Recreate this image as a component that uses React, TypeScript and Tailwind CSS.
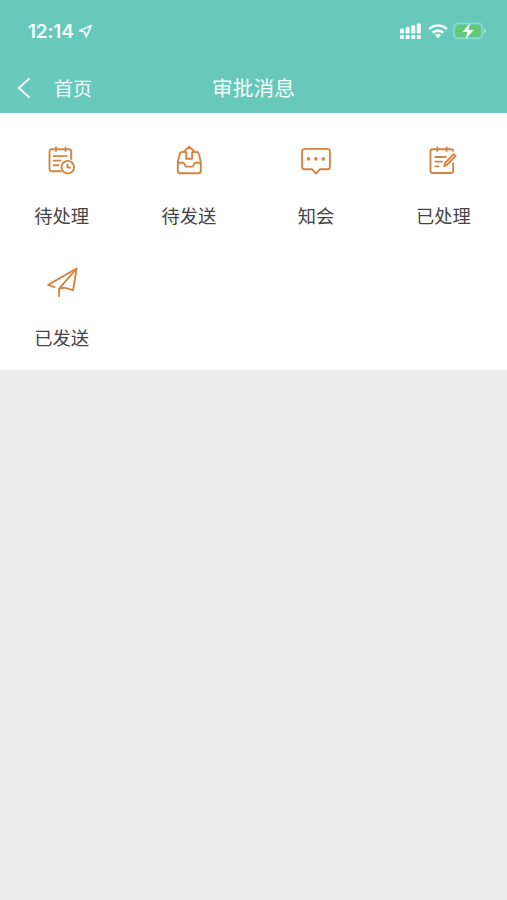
import type { ReactNode } from 'react';

interface MenuItem {
  label: string;
  icon: ReactNode;
}

const menu: MenuItem[] = [
  {
    label: '待处理',
    icon: (
      <>
        <path d="M15.5 26.3H5.8a2.3 2.3 0 0 1-2.3-2.3V6.6a2.3 2.3 0 0 1 2.3-2.3h17.1a2.3 2.3 0 0 1 2.3 2.3v8.2" />
        <path d="M10 1.8v5M19.6 1.8v5M7 11.1h14.4M7 15.6h8.4M7 20.2h6" />
        <circle cx="21.8" cy="22.2" r="6.3" />
        <path d="M21.5 18.6v4h3.3" />
      </>
    ),
  },
  {
    label: '待发送',
    icon: (
      <>
        <path d="M9.6 6.6c-1.7.2-2.6 1.3-3.1 3L4.8 17v8.7a2.6 2.6 0 0 0 2.6 2.6h17.8a2.6 2.6 0 0 0 2.6-2.6V17l-1.7-7.4c-.5-1.7-1.4-2.8-3.1-3" />
        <path d="M4.8 17.8h5.6c1.2 0 1.3 3.8 3 3.8h5.8c1.7 0 1.8-3.8 3-3.8h5.6" />
        <path d="M13.3 13.8V7.1h-3.1l6-5.4 6 5.4h-3.1v6.7z" />
      </>
    ),
  },
  {
    label: '知会',
    icon: (
      <>
        <path d="M4.7 3.9h22.6a2.6 2.6 0 0 1 2.6 2.6v15.2a2.6 2.6 0 0 1-2.6 2.6h-7.4L16 28.6l-3.9-4.3H4.7a2.6 2.6 0 0 1-2.6-2.6V6.5a2.6 2.6 0 0 1 2.6-2.6z" />
        <g fill="currentColor" stroke="none">
          <circle cx="8.5" cy="13.9" r="1.8" />
          <circle cx="15.9" cy="13.9" r="1.8" />
          <circle cx="23.3" cy="13.9" r="1.8" />
        </g>
      </>
    ),
  },
  {
    label: '已处理',
    icon: (
      <>
        <path d="M26.2 17.5v8.3a2.2 2.2 0 0 1-2.2 2.2H5.7a2.2 2.2 0 0 1-2.2-2.2V6.5a2.2 2.2 0 0 1 2.2-2.2H24a2.2 2.2 0 0 1 2.2 2.2" />
        <path d="M10.3 1.8v5M19.6 1.8v5M7.6 12h11.8M7.6 16.6h8.2M7.6 21.4h4.6" />
        <path d="M17.2 21.2l1-3.4 8.3-8.7 2 1.9-8.3 8.7z" />
      </>
    ),
  },
  {
    label: '已发送',
    icon: (
      <>
        <path d="M9.3 20.3l-7.1-2.4L30.6 1.5l-3.5 21.7-8.9-2.5" />
        <path d="M30.6 1.5L13.1 21.6v8.2M13.1 21.6l5.1-.9" />
      </>
    ),
  },
];

function StatusBar() {
  return (
    <div className="flex h-[62px] items-center pl-[28px] pr-[20px]">
      <span className="font-['Inter',sans-serif] text-[19px] leading-none font-semibold tracking-[-0.2px]">12:14</span>
      <svg className="ml-[4px]" width="15" height="15" viewBox="0 0 15 15" fill="none" stroke="currentColor" strokeWidth="1.7" strokeLinejoin="round">
        <path d="M13.3 1.5L1.7 6.7l5 1.3 1.5 5z" />
      </svg>
      <svg className="ml-auto" width="21" height="18" viewBox="0 0 21 18" fill="currentColor">
        <rect x="0" y="6.5" width="4" height="5" rx="1" />
        <rect x="5.6" y="5" width="4" height="6.5" rx="1" />
        <rect x="11.2" y="3.2" width="4" height="8.3" rx="1" />
        <rect x="16.8" y="1.4" width="4" height="10.1" rx="1" />
        <rect x="0" y="13" width="4" height="4" rx="1.2" />
        <rect x="5.6" y="13" width="4" height="4" rx="1.2" />
        <rect x="11.2" y="13" width="4" height="4" rx="1.2" />
        <rect x="16.8" y="13" width="4" height="4" rx="1.2" />
      </svg>
      <svg className="ml-[7px]" width="20" height="16" viewBox="0 0 20 16" fill="none" stroke="currentColor" strokeWidth="2.7">
        <path d="M1.2 6.1a12.6 12.6 0 0 1 17.6 0" />
        <path d="M4.6 9.7a7.8 7.8 0 0 1 10.8 0" />
        <path d="M10 15.2l-3-3a4.3 4.3 0 0 1 6 0z" fill="currentColor" stroke="none" />
      </svg>
      <svg className="ml-[5px]" width="34" height="18" viewBox="0 0 34 18">
        <rect x="0.9" y="1.5" width="28.6" height="15" rx="4.2" fill="none" stroke="#8edbcf" strokeWidth="1.4" />
        <rect x="2.9" y="3.4" width="24.6" height="11.2" rx="2.4" fill="#61cb73" />
        <path d="M31 6.5c1.6.4 2 1.4 2 2.5s-.4 2.1-2 2.5z" fill="#a5e4da" />
        <path d="M17.2.8L9.6 10h4.8l-1.9 7.2L20.6 8h-5z" fill="#fff" />
      </svg>
    </div>
  );
}

function NavBar() {
  return (
    <div className="grid h-[51px] grid-cols-[1fr_auto_1fr] items-center">
      <div className="flex items-center pl-[17px]">
        <svg width="14" height="22" viewBox="0 0 14 22" fill="none" stroke="currentColor" strokeWidth="1.9">
          <path d="M12.6 1.2L1.8 11l10.8 9.8" />
        </svg>
        <span className="ml-[23px] text-[19px] leading-none">首页</span>
      </div>
      <h1 className="text-[20.7px] leading-none font-normal">审批消息</h1>
    </div>
  );
}

export default function App() {
  return (
    <div className="min-h-screen overflow-hidden bg-[#ededed] font-['Noto_Sans_CJK_SC',sans-serif]">
      <header className="h-[113px] bg-[#67c8bb] text-[#f3fffc]">
        <StatusBar />
        <NavBar />
      </header>

      <main className="-ml-[2px] grid h-[257px] w-[509px] grid-cols-4 content-start bg-white pt-[32px]">
        {menu.map((item) => (
          <button key={item.label} className="flex h-[121.5px] flex-col items-center">
            <svg className="size-8 text-[#d58440]" viewBox="0 0 32 32" fill="none" stroke="currentColor" strokeWidth="1.9" strokeLinejoin="round">
              {item.icon}
            </svg>
            <span className="mt-[25px] text-[18.3px] leading-[26px] text-[#444]">{item.label}</span>
          </button>
        ))}
      </main>
    </div>
  );
}
